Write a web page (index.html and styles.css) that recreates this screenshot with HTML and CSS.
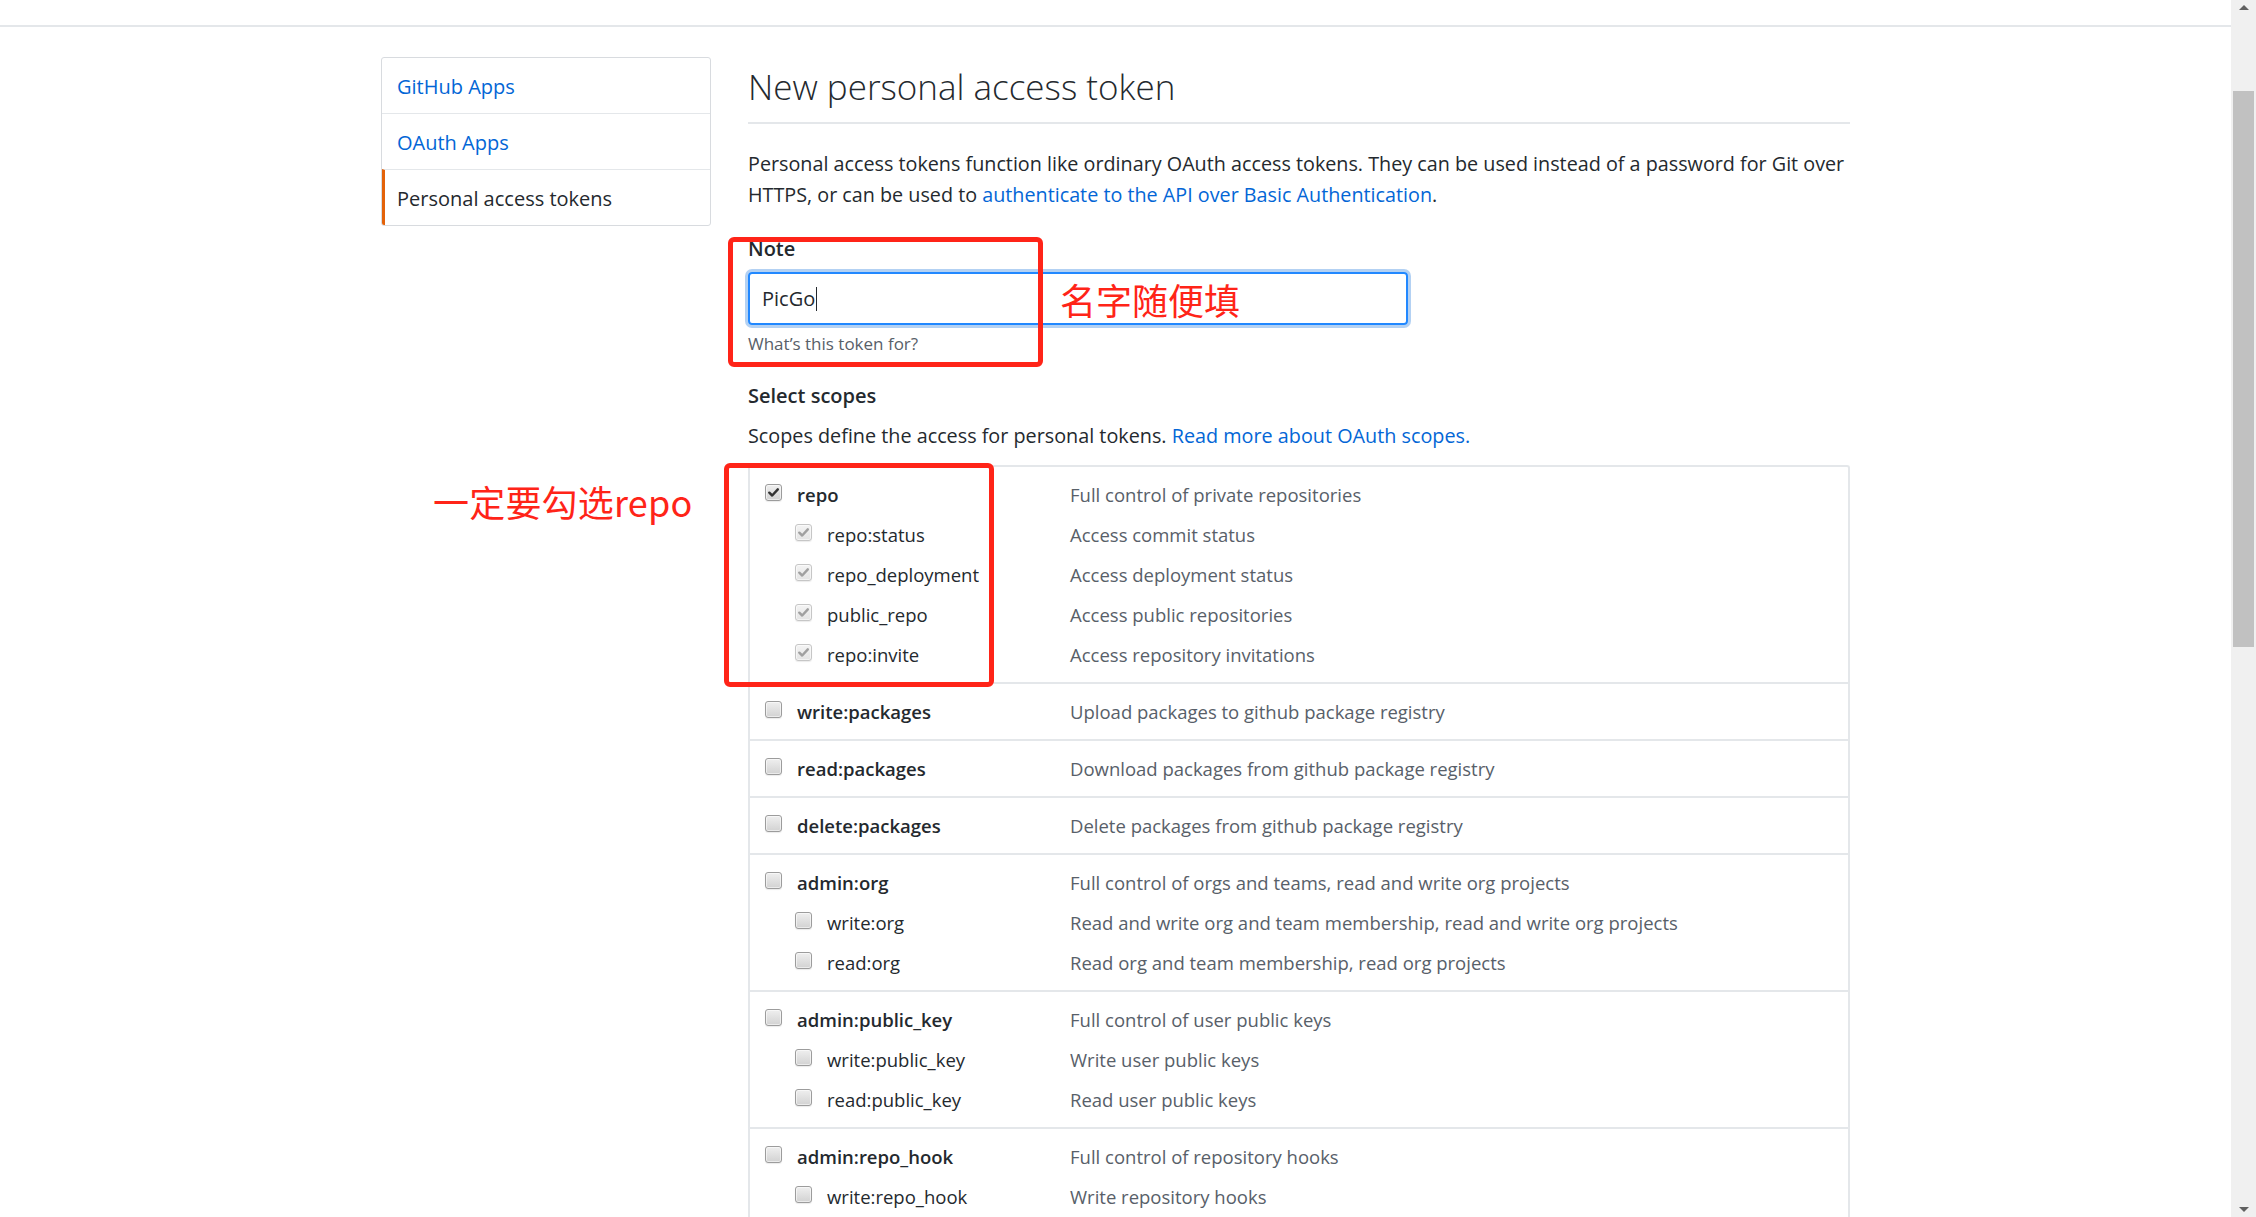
FILE: index.html
```html
<!DOCTYPE html>
<html lang="en">
<head>
<meta charset="utf-8">
<title>New personal access token</title>
<link rel="stylesheet" href="styles.css">
</head>
<body>
<div class="page">
  <div class="viewport">
    <div class="header"></div>
    <div class="container">
      <nav class="sidebar">
        <a class="menu-item">GitHub Apps</a>
        <a class="menu-item">OAuth Apps</a>
        <a class="menu-item selected">Personal access tokens</a>
      </nav>
      <main class="main">
        <div class="subhead"><h2 class="subhead-heading">New personal access token</h2></div>
        <p class="intro">Personal access tokens function like ordinary OAuth access tokens. They can be used instead of a password for Git over HTTPS, or can be used to <a class="link">authenticate to the API over Basic Authentication</a>.</p>
        <div class="form-group">
          <div class="label">Note</div>
          <div class="input">PicGo<span class="caret"></span></div>
          <div class="hint">What’s this token for?</div>
        </div>
        <div class="scopes-head">Select scopes</div>
        <p class="scopes-desc">Scopes define the access for personal tokens. <a class="link">Read more about OAuth scopes.</a></p>
        <div class="scope-table">
          <div class="group">
            <div class="row"><div class="name"><span class="cb checked"><svg viewBox="0 0 16 16"><path d="M3.5 8.2 L6.6 11.2 L12.6 4.6"/></svg></span><b>repo</b></div><div class="desc">Full control of private repositories</div></div>
            <div class="row sub"><div class="name"><span class="cb disabled"><svg viewBox="0 0 16 16"><path d="M3.5 8.2 L6.6 11.2 L12.6 4.6"/></svg></span><span>repo:status</span></div><div class="desc">Access commit status</div></div>
            <div class="row sub"><div class="name"><span class="cb disabled"><svg viewBox="0 0 16 16"><path d="M3.5 8.2 L6.6 11.2 L12.6 4.6"/></svg></span><span>repo_deployment</span></div><div class="desc">Access deployment status</div></div>
            <div class="row sub"><div class="name"><span class="cb disabled"><svg viewBox="0 0 16 16"><path d="M3.5 8.2 L6.6 11.2 L12.6 4.6"/></svg></span><span>public_repo</span></div><div class="desc">Access public repositories</div></div>
            <div class="row sub"><div class="name"><span class="cb disabled"><svg viewBox="0 0 16 16"><path d="M3.5 8.2 L6.6 11.2 L12.6 4.6"/></svg></span><span>repo:invite</span></div><div class="desc">Access repository invitations</div></div>
          </div>
          <div class="group">
            <div class="row"><div class="name"><span class="cb"></span><b>write:packages</b></div><div class="desc">Upload packages to github package registry</div></div>
          </div>
          <div class="group">
            <div class="row"><div class="name"><span class="cb"></span><b>read:packages</b></div><div class="desc">Download packages from github package registry</div></div>
          </div>
          <div class="group">
            <div class="row"><div class="name"><span class="cb"></span><b>delete:packages</b></div><div class="desc">Delete packages from github package registry</div></div>
          </div>
          <div class="group">
            <div class="row"><div class="name"><span class="cb"></span><b>admin:org</b></div><div class="desc">Full control of orgs and teams, read and write org projects</div></div>
            <div class="row sub"><div class="name"><span class="cb"></span><span>write:org</span></div><div class="desc">Read and write org and team membership, read and write org projects</div></div>
            <div class="row sub"><div class="name"><span class="cb"></span><span>read:org</span></div><div class="desc">Read org and team membership, read org projects</div></div>
          </div>
          <div class="group">
            <div class="row"><div class="name"><span class="cb"></span><b>admin:public_key</b></div><div class="desc">Full control of user public keys</div></div>
            <div class="row sub"><div class="name"><span class="cb"></span><span>write:public_key</span></div><div class="desc">Write user public keys</div></div>
            <div class="row sub"><div class="name"><span class="cb"></span><span>read:public_key</span></div><div class="desc">Read user public keys</div></div>
          </div>
          <div class="group">
            <div class="row"><div class="name"><span class="cb"></span><b>admin:repo_hook</b></div><div class="desc">Full control of repository hooks</div></div>
            <div class="row sub"><div class="name"><span class="cb"></span><span>write:repo_hook</span></div><div class="desc">Write repository hooks</div></div>
            <div class="row sub"><div class="name"><span class="cb"></span><span>read:repo_hook</span></div><div class="desc">Read repository hooks</div></div>
          </div>
        </div>
      </main>
      <div class="mark box-note"></div>
      <div class="mark box-repo"></div>
      <div class="mark-text text-note">名字随便填</div>
      <div class="mark-text text-repo">一定要勾选repo</div>
    </div>
  </div>
  <div class="scrollbar">
    <div class="arrow up"></div>
    <div class="track"><div class="thumb"></div></div>
    <div class="arrow down"></div>
  </div>
</div>
</body>
</html>
```
FILE: styles.css
```css
html, body {
  margin: 0;
  padding: 0;
  background: #fff;
}
body {
  font-family: "Open Sans", "Noto Sans", sans-serif;
  font-size: 20px;
  color: #24292e;
  overflow: hidden;
}
.page {
  display: flex;
  width: 2256px;
  height: 1217px;
  overflow: hidden;
}
.viewport {
  flex: 1;
  min-width: 0;
  overflow: hidden;
}
.header {
  height: 25px;
  border-bottom: 2px solid #e4e7ea;
}
.container {
  position: relative;
  width: 1469px;
  margin: 30px auto 0;
  display: flex;
  gap: 37px;
  align-items: flex-start;
}
.sidebar {
  width: 328px;
  flex: none;
  border: 1px solid #d8dbdf;
  border-radius: 3px;
  display: flex;
  flex-direction: column;
}
.menu-item {
  display: block;
  padding: 13px 15px 11px;
  line-height: 31px;
  color: #0366d6;
  border-top: 1px solid #e4e7ea;
}
.menu-item:first-child { border-top: 0; }
.menu-item.selected {
  color: #24292e;
  border-left: 3px solid #e36209;
  padding-left: 12px;
  border-bottom-left-radius: 2px;
}
.main {
  flex: 1;
  min-width: 0;
}
.subhead {
  border-bottom: 2px solid #e4e7ea;
  padding-top: 3px;
  padding-bottom: 8px;
}
.subhead-heading {
  margin: 0;
  font-size: 35px;
  font-weight: 300;
  line-height: 54px;
}
.intro {
  margin: 24px 0 0;
  font-size: 19.75px;
  line-height: 31px;
}
.link { color: #0366d6; }
.form-group { margin-top: 23px; }
.label {
  font-weight: 600;
  line-height: 31px;
}
.input {
  margin-top: 8px;
  width: 660px;
  box-sizing: border-box;
  height: 53px;
  border: 2px solid #2188ff;
  border-radius: 4px;
  box-shadow: 0 0 0 3px rgba(3, 102, 214, 0.3);
  padding: 0 12px;
  line-height: 49px;
  display: flex;
  align-items: center;
}
.caret {
  display: inline-block;
  width: 1px;
  height: 24px;
  background: #24292e;
  margin-left: 1px;
}
.hint {
  margin-top: 5px;
  font-size: 17px;
  line-height: 27px;
  color: #586069;
}
.scopes-head {
  margin-top: 23px;
  font-weight: 600;
  line-height: 31px;
}
.scopes-desc {
  margin: 9px 0 0;
  font-size: 19.8px;
  line-height: 31px;
}
.scope-table {
  margin-top: 13.5px;
  border: 2px solid #e4e7ea;
  border-bottom: 0;
  border-radius: 3px 3px 0 0;
  font-size: 18.5px;
}
.group {
  padding: 8px 0 7px;
  border-bottom: 2px solid #e4e7ea;
}
.row {
  display: flex;
  align-items: center;
  height: 40px;
}
.name {
  width: 320px;
  flex: none;
  display: flex;
  align-items: center;
  gap: 15px;
  padding-left: 15px;
  box-sizing: border-box;
}
.row.sub .name { padding-left: 45px; }
.name b { font-weight: 600; }
.desc { color: #586069; }
.cb {
  width: 15px;
  height: 15px;
  flex: none;
  border: 1px solid #9c9c9c;
  border-radius: 3px;
  background: linear-gradient(#efefef, #d2d2d2);
  box-shadow: inset 0 0 0 1px rgba(255,255,255,0.55), 0 1px 1px rgba(0,0,0,0.08);
  position: relative;
  top: -2px;
  display: flex;
}
.cb svg {
  width: 15px;
  height: 15px;
  fill: none;
  stroke: #333;
  stroke-width: 2.6;
  stroke-linecap: round;
  stroke-linejoin: round;
}
.cb.disabled {
  border-color: #c6c6c6;
  background: linear-gradient(#f4f4f4, #e4e4e4);
}
.cb.disabled svg { stroke: #a0a0a0; }
.mark {
  position: absolute;
  border: 5px solid #ff2418;
  border-radius: 6px;
  box-sizing: border-box;
}
.box-note { left: 347px; top: 180px; width: 315px; height: 130px; }
.box-repo { left: 343px; top: 406px; width: 270px; height: 224px; }
.mark-text {
  position: absolute;
  color: #ff2418;
  font-family: "Noto Sans CJK SC", sans-serif;
  font-size: 36px;
  line-height: 36px;
  white-space: nowrap;
}
.text-note { left: 679px; top: 224px; }
.text-repo { left: 52px; top: 426px; letter-spacing: 0.2px; }
.scrollbar {
  width: 25px;
  flex: none;
  background: #f0f0f0;
  display: flex;
  flex-direction: column;
  align-items: center;
}
.arrow {
  width: 0;
  height: 0;
  border-left: 5px solid transparent;
  border-right: 5px solid transparent;
  margin: 5px 0;
}
.arrow.up { border-bottom: 5px solid #606060; }
.arrow.down { border-top: 5px solid #606060; }
.track { flex: 1; align-self: stretch; padding-top: 76px; }
.thumb {
  margin: 0 2px;
  height: 556px;
  background: #c1c1c1;
}
```
